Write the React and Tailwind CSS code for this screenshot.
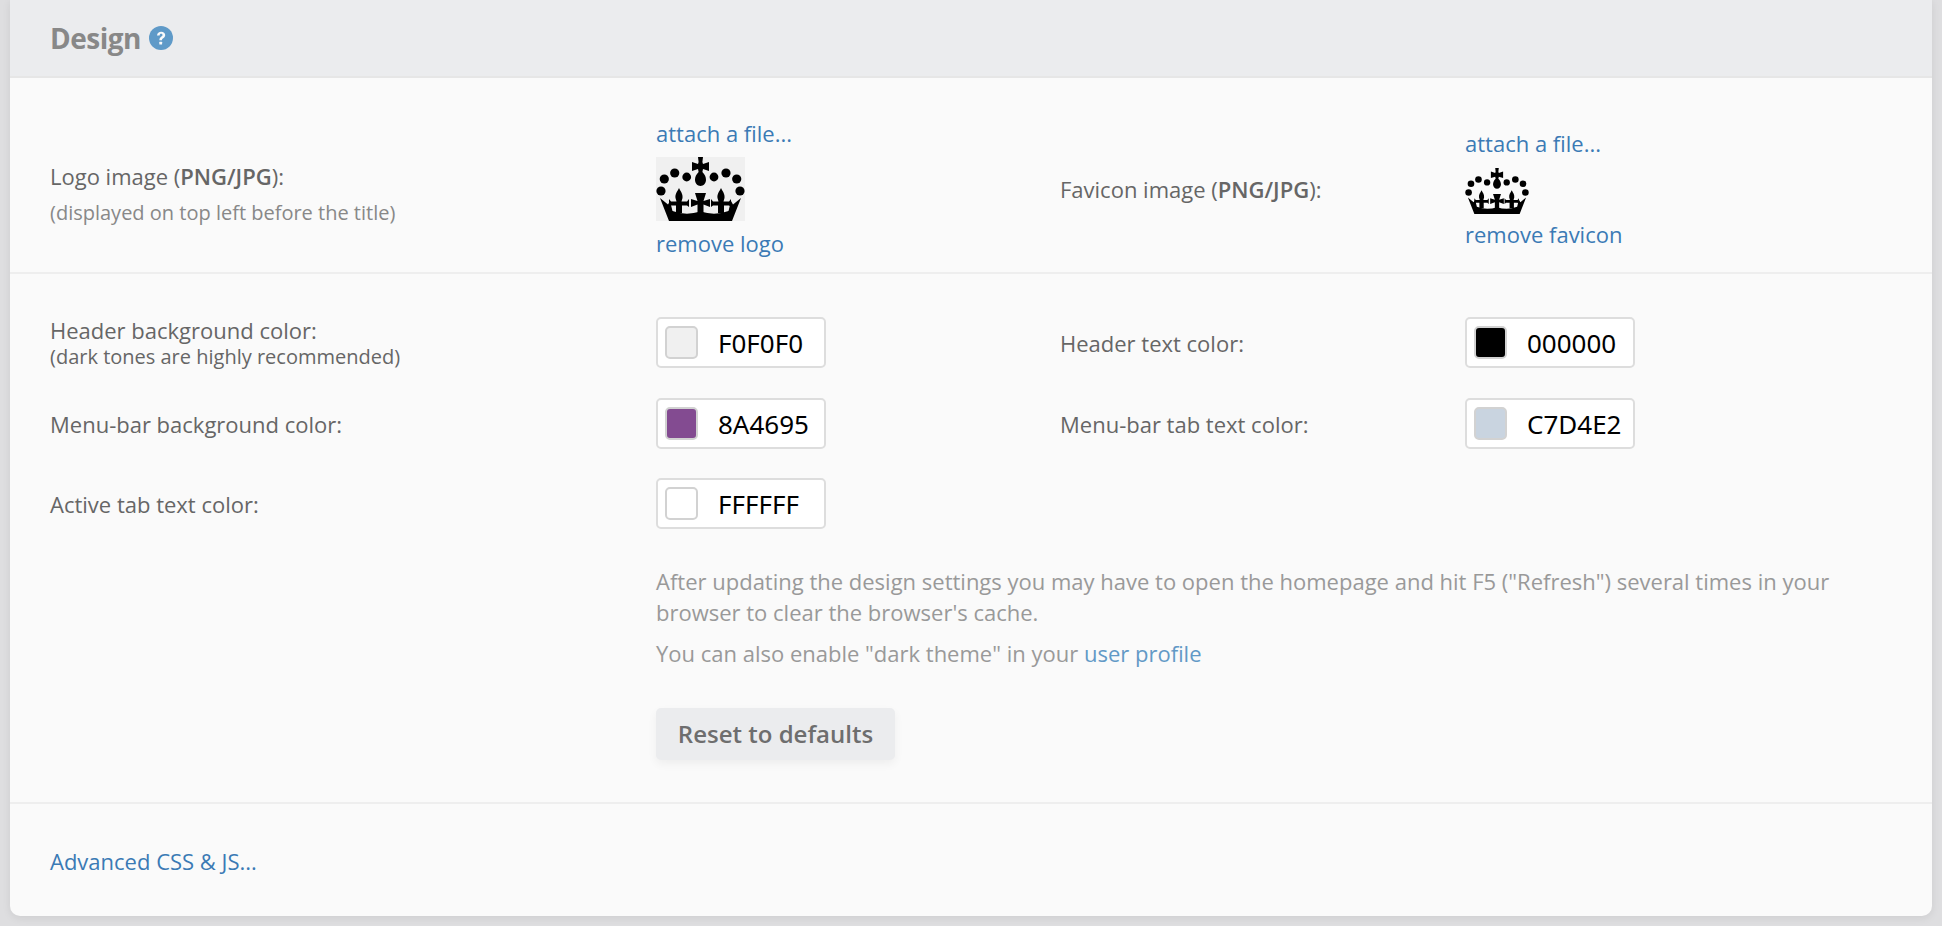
import React from 'react';

const fleur = 'M23 31C25 35 27 37 26.500 41L25.500 44.500 31 44.500 33 42V50L31 48.500H26V56H20V48.500H15L13 50V42L15 44.500H20.500L19.500 41C19 37 21 35 23 31Z';

const Crown = ({ className }) => (
  <svg viewBox="0 0 89 64" className={className} fill="#000">
    <path d="M42 0h5l-.6 5 .6 2 6-2v9l-6-2-.6 3c2.500 2.500 3.600 5 3.600 8 0 3-2.500 6-5.500 6s-5.500-3-5.500-6c0-3 1.100-5.500 3.600-8l-.6-3-6 2V5l6 2 .6-2z" />
    <circle cx="18.700" cy="16" r="4.600" />
    <circle cx="8.300" cy="22" r="4.600" />
    <circle cx="30.700" cy="20" r="4.400" />
    <circle cx="58" cy="20" r="4.400" />
    <circle cx="70" cy="16" r="4.600" />
    <circle cx="80.700" cy="22" r="4.600" />
    <circle cx="5" cy="34" r="4.600" />
    <circle cx="84" cy="34" r="4.600" />
    <path d={fleur} />
    <path d={fleur} transform="translate(42 0)" />
    <path d="M39 36H50L47.500 44 54 42V50L47.500 47.500V56H41.500V47.500L35 50V42L41.500 44Z" />
    <path d="M4 41L12 47.500 14 44 16.500 54Q30 59 44.500 54.500 59 59 72.500 54L75 44 77 47.500 85 41 76 64H13Z" />
  </svg>
);

const ColorField = ({ color, value }) => (
  <div className="flex h-[51px] w-[170px] items-center rounded-[5px] border-2 border-[#dddddd] bg-white pl-[7px]">
    <div className="h-[33px] w-[33px] rounded-[5px] border-2 border-[#d2d2d2]" style={{ backgroundColor: color }} />
    <span className="ml-[20px] font-['Noto_Sans',sans-serif] text-[26px] leading-none text-black">{value}</span>
  </div>
);

const Link = ({ children }) => (
  <a className="text-[#3b7ab5]">{children}</a>
);

export default function App() {
  return (
    <div className="h-screen overflow-hidden bg-[#dedee0] px-[10px] pb-[10px] font-['Open_Sans',sans-serif] text-[22px] text-[#666666]">
      <div className="flex h-full flex-col overflow-hidden rounded-b-[10px] bg-[#fafafa] shadow-[0_2px_8px_rgba(0,0,0,0.08)]">
        <div className="flex h-[78px] items-center gap-[8px] border-b-2 border-[#e6e6e6] bg-[#ebecee] pl-[40px]">
          <h1 className="text-[28px] font-bold leading-none tracking-[-0.5px] text-[#888888]">Design</h1>
          <svg viewBox="0 0 24 24" className="h-[24px] w-[24px]">
            <circle cx="12" cy="12" r="12" fill="#5f9ac8" />
            <path d="M8 9.400c.2-2.400 2-3.700 4.200-3.700 2.300 0 4 1.300 4 3.400 0 1.700-.9 2.500-2 3.200-.9.600-1.200 1-1.200 2h-2.600c0-1.800.5-2.700 1.700-3.500.9-.6 1.400-1 1.400-1.700 0-.8-.6-1.300-1.400-1.300-.9 0-1.400.6-1.500 1.600z" fill="#fafafa" />
            <rect x="10.300" y="15.800" width="2.800" height="2.800" rx=".5" fill="#fafafa" />
          </svg>
        </div>

        <div className="flex h-[196px] items-center border-b-2 border-[#eeeeee] pl-[40px] pt-[26px]">
          <div className="w-[606px] pt-[12px]">
            <div className="leading-[28px]">Logo image (<b className="font-semibold">PNG/JPG</b>):</div>
            <div className="mt-[10px] text-[20px] leading-[26px] text-[#888888]">(displayed on top left before the title)</div>
          </div>
          <div className="w-[404px]">
            <div className="leading-[28px]"><Link>attach a file...</Link></div>
            <Crown className="mb-[8px] mt-[10px] h-[64px] w-[89px] bg-[#f0f0f0]" />
            <div className="leading-[28px]"><Link>remove logo</Link></div>
          </div>
          <div className="w-[405px] pt-[2px]">Favicon image (<b className="font-semibold">PNG/JPG</b>):</div>
          <div>
            <div className="leading-[28px]"><Link>attach a file...</Link></div>
            <Crown className="mb-[6px] mt-[11px] h-[46px] w-[64px]" />
            <div className="leading-[28px]"><Link>remove favicon</Link></div>
          </div>
        </div>

        <div className="flex h-[530px] flex-col border-b-2 border-[#eeeeee] pl-[40px] pt-[43px]">
          <div className="flex items-center">
            <div className="w-[606px]">
              <div className="leading-[26px]">Header background color:</div>
              <div className="mt-[3px] text-[20px] leading-[22px]">(dark tones are highly recommended)</div>
            </div>
            <div className="w-[404px]"><ColorField color="#f0f0f0" value="F0F0F0" /></div>
            <div className="w-[405px] pt-[2px]">Header text color:</div>
            <ColorField color="#000000" value="000000" />
          </div>
          <div className="mt-[30px] flex items-center">
            <div className="w-[606px] pt-[2px]">Menu-bar background color:</div>
            <div className="w-[404px]"><ColorField color="#834b91" value="8A4695" /></div>
            <div className="w-[405px] pt-[2px]">Menu-bar tab text color:</div>
            <ColorField color="#c9d4e0" value="C7D4E2" />
          </div>
          <div className="mt-[29px] flex items-center">
            <div className="w-[606px] pt-[2px]">Active tab text color:</div>
            <ColorField color="#ffffff" value="FFFFFF" />
          </div>
          <div className="ml-[606px] mt-[37px] w-[1200px] text-[#999999]">
            <p className="leading-[31px]">After updating the design settings you may have to open the homepage and hit F5 ("Refresh") several times in your browser to clear the browser's cache.</p>
            <p className="mt-[10px] leading-[31px]">You can also enable "dark theme" in your <a className="text-[#6299c6]">user profile</a></p>
            <button className="mt-[39px] h-[52px] w-[239px] rounded-[5px] bg-[#ebecee] text-[24px] font-semibold text-[#6e6e6e] shadow-[0_4px_10px_rgba(0,0,0,0.05)]">Reset to defaults</button>
          </div>
        </div>

        <div className="flex flex-1 items-center pl-[40px] pt-[2px]">
          <Link>Advanced CSS &amp; JS...</Link>
        </div>
      </div>
    </div>
  );
}
